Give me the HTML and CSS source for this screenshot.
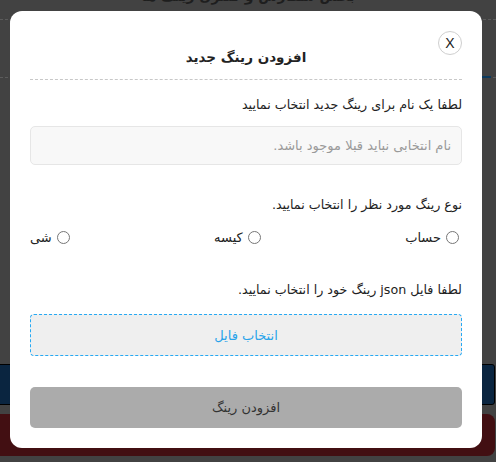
FILE: index.html
```html
<!DOCTYPE html>
<html lang="fa" dir="rtl">
<head>
<meta charset="utf-8">
<link rel="stylesheet" href="styles.css">
</head>
<body>
<div class="page">
  <h2 class="page-title">بخش سفارش و کنترل رینگ ها</h2>
  <div class="page-sep"></div>
  <div class="page-tabs"><span class="tab-line"></span></div>
  <div class="page-spacer"></div>
  <div class="blue-box"></div>
  <div class="red-box"></div>
</div>

<div class="modal">
  <div class="modal-header">
    <button class="close-btn" type="button">X</button>
    <h3 class="modal-title">افزودن رینگ جدید</h3>
  </div>
  <p class="field-label first">لطفا یک نام برای رینگ جدید انتخاب نمایید</p>
  <input class="name-input" type="text" placeholder="نام انتخابی نباید قبلا موجود باشد.">
  <p class="field-label type-label">نوع رینگ مورد نظر را انتخاب نمایید.</p>
  <div class="radio-row">
    <label class="radio-item"><input type="radio" name="t"><span>حساب</span></label>
    <label class="radio-item"><input type="radio" name="t"><span>کیسه</span></label>
    <label class="radio-item"><input type="radio" name="t"><span>شی</span></label>
  </div>
  <p class="field-label file-label">لطفا فایل json رینگ خود را انتخاب نمایید.</p>
  <button class="file-btn" type="button">انتخاب فایل</button>
  <button class="submit-btn" type="button">افزودن رینگ</button>
</div>
</body>
</html>
```
FILE: styles.css
```css
* { box-sizing: border-box; }
html, body { margin: 0; padding: 0; }
body {
  background: #424242;
  font-family: "DejaVu Sans", "Noto Sans", sans-serif;
  width: 496px;
  height: 462px;
  overflow: hidden;
}
.page { direction: rtl; }
.page-title {
  margin: -14px 0 0;
  height: 33px;
  text-align: center;
  font-size: 14px;
  font-weight: bold;
  color: #1e1e1e;
  line-height: 20px;
}
.page-sep {
  border-top: 1px dashed #5c5c5c;
}
.page-tabs {
  height: 58px;
  border-bottom: 1px dashed #5c5c5c;
  position: relative;
}
.tab-line {
  position: absolute;
  right: 5px;
  bottom: -1px;
  width: 60px;
  height: 2px;
  background: #0b3a5e;
}
.page-spacer { height: 286px; }
.blue-box {
  height: 41px;
  background: #0a2540;
  border: 1px solid #000;
  margin-right: 1px;
  margin-left: -4px;
  border-radius: 3px;
}
.red-box {
  height: 42px;
  margin-top: 9px;
  background: #420f12;
  margin-right: 1px;
  border-radius: 8px;
  margin-left: -8px;
}
.modal {
  position: fixed;
  top: 11px;
  left: 10px;
  width: 472px;
  height: 437px;
  background: #fff;
  border-radius: 12px;
  padding: 20px 20px;
  direction: rtl;
  color: #222;
}
.modal-header {
  position: relative;
  border-bottom: 1px dashed #c8c8c8;
  padding-top: 15px;
  padding-bottom: 11px;
}
.close-btn {
  position: absolute;
  top: 0;
  right: 0;
  width: 24px;
  height: 24px;
  border-radius: 50%;
  border: 1px solid #cfcfcf;
  background: #fff;
  font-family: "Liberation Sans", sans-serif;
  font-size: 14px;
  color: #222;
  padding: 0;
  line-height: 22px;
}
.modal-title {
  margin: 0;
  text-align: center;
  font-size: 13.5px;
  line-height: 22px;
  font-weight: bold;
  color: #222;
}
.field-label {
  margin: 0;
  font-size: 12.7px;
  line-height: 20px;
  color: #222;
}
.field-label.first { margin-top: 15px; }
.name-input {
  display: block;
  width: 100%;
  height: 39px;
  margin-top: 11px;
  background: #f8f8f8;
  border: 1px solid #e6e6e6;
  border-radius: 5px;
  padding: 0 10px;
  font-family: inherit;
  font-size: 13px;
  direction: rtl;
}
.name-input::placeholder { color: #9a9a9a; }
.type-label { margin-top: 30px; }
.radio-row {
  display: flex;
  justify-content: space-between;
  margin-top: 12px;
  height: 20px;
  align-items: center;
}
.radio-item {
  display: flex;
  align-items: center;
  font-size: 13px;
  color: #222;
}
.radio-item input {
  margin: 0 3px 0 5px;
  width: 13px;
  height: 13px;
}
.file-label { margin-top: 33px; }
.file-btn {
  display: block;
  width: 100%;
  height: 42px;
  margin-top: 14px;
  background: #efefef;
  border: 1px dashed #26a9f3;
  border-radius: 4px;
  color: #28a3ea;
  font-family: inherit;
  font-size: 13px;
}
.submit-btn {
  display: block;
  width: 100%;
  height: 41px;
  margin-top: 31px;
  background: #ababab;
  border: none;
  border-radius: 5px;
  color: #333;
  font-family: inherit;
  font-size: 13px;
}
```
